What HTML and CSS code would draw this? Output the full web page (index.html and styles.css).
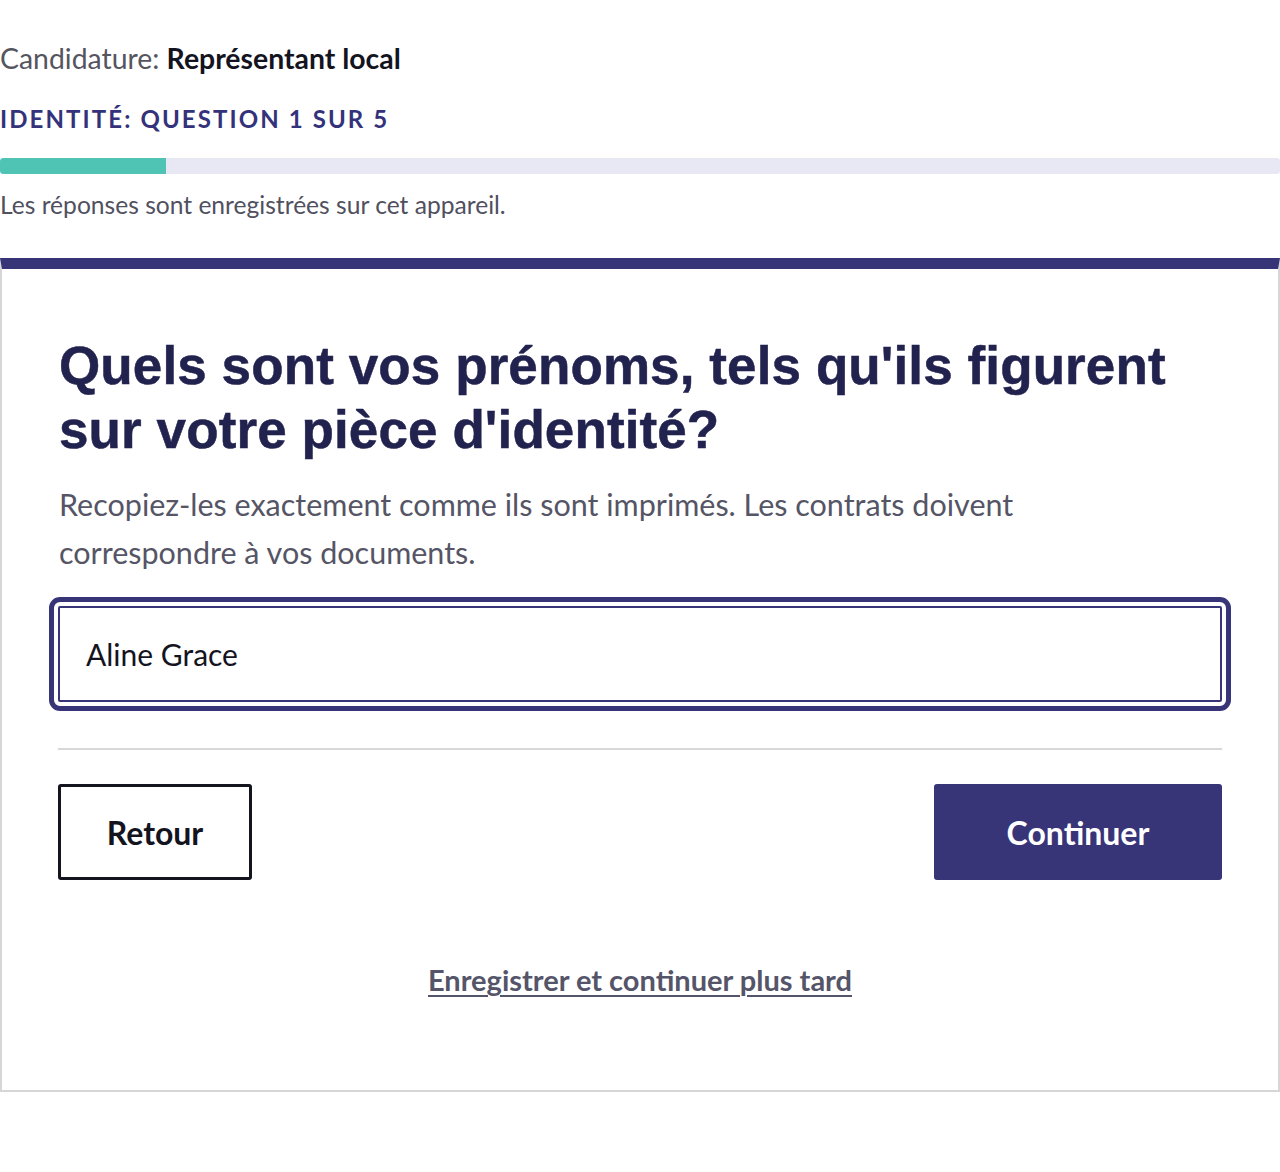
FILE: index.html
```html
<!DOCTYPE html>
<html lang="fr">
<head>
<meta charset="utf-8">
<title>Candidature</title>
<link rel="stylesheet" href="styles.css">
</head>
<body>
<main class="page">
  <header class="head">
    <p class="role">Candidature: <strong>Représentant local</strong></p>
    <p class="step">IDENTITÉ: QUESTION 1 SUR 5</p>
    <div class="progress"><div class="progress-fill" style="width:13%"></div></div>
    <p class="saved">Les réponses sont enregistrées sur cet appareil.</p>
  </header>
  <section class="card">
    <h1 class="question">Quels sont vos prénoms, tels qu'ils figurent sur votre pièce d'identité?</h1>
    <p class="hint">Recopiez-les exactement comme ils sont imprimés. Les contrats doivent correspondre à vos documents.</p>
    <div class="field">
      <input class="input" type="text" value="Aline Grace" aria-label="Prénoms">
    </div>
    <hr class="divider">
    <div class="actions">
      <button class="btn btn-back" type="button">Retour</button>
      <button class="btn btn-next" type="button">Continuer</button>
    </div>
    <p class="later"><a href="#">Enregistrer et continuer plus tard</a></p>
  </section>
</main>
</body>
</html>
```
FILE: styles.css
```css
* { box-sizing: border-box; }
html, body { margin: 0; padding: 0; background: #fff; }
body {
  font-family: Lato, "Open Sans", "Liberation Sans", sans-serif;
  color: #14141f;
}
.page { width: 1280px; padding-top: 40px; }
.head p { margin: 0; }
.role {
  font-size: 28.4px;
  line-height: 36px;
  color: #555560;
}
.role strong { color: #14141f; font-weight: 700; }
.step {
  margin-top: 27px !important;
  font-size: 24px;
  line-height: 32px;
  font-weight: 700;
  letter-spacing: 2.1px;
  color: #33327a;
}
.progress {
  margin-top: 23px;
  height: 16px;
  background: #e8e8f4;
  border-radius: 3px;
  overflow: hidden;
}
.progress-fill { height: 100%; background: #4fc4b4; border-radius: 3px 0 0 3px; }
.saved {
  margin-top: 16px !important;
  font-size: 24.6px;
  line-height: 30px;
  color: #50505f;
}
.card {
  margin-top: 38px;
  border: 2px solid #d6d6d6;
  border-top: 11px solid #373578;
  padding: 65px 56px 92px 56px;
}
.question {
  margin: 0 0 0 1px;
  font-family: "Liberation Sans", Arial, sans-serif;
  font-weight: 700;
  font-size: 53px;
  line-height: 64px;
  letter-spacing: 0.1px;
  color: #22224f;
  -webkit-text-stroke: 0.5px #22224f;
}
.hint {
  margin: 18px 0 0 1px;
  font-size: 30.5px;
  line-height: 48px;
  color: #555566;
  max-width: 1000px;
}
.field { margin-top: 30px; }
.input {
  display: block;
  width: 100%;
  height: 96px;
  border: 2px solid #373578;
  border-radius: 2px;
  padding: 0 26px;
  font-family: inherit;
  font-size: 30px;
  color: #14141f;
  outline: 5px solid #373578;
  outline-offset: 4px;
  box-shadow: none;
}
.divider {
  margin: 46px 0 0;
  border: 0;
  border-top: 2px solid #d8d8d8;
}
.actions {
  margin-top: 34px;
  display: flex;
  justify-content: space-between;
}
.btn {
  height: 96px;
  font-family: inherit;
  font-size: 32px;
  font-weight: 700;
  border-radius: 3px;
  cursor: pointer;
}
.btn-back {
  width: 194px;
  background: #fff;
  border: 3px solid #14141f;
  color: #14141f;
}
.btn-next {
  width: 288px;
  background: #373578;
  border: 0;
  color: #fff;
}
.later {
  margin: 82px 0 0;
  text-align: center;
  font-size: 29px;
  line-height: 36px;
  font-weight: 700;
}
.later a {
  color: #55556a;
  text-decoration: underline;
  text-underline-offset: 4px;
  text-decoration-thickness: 2px;
}
```
